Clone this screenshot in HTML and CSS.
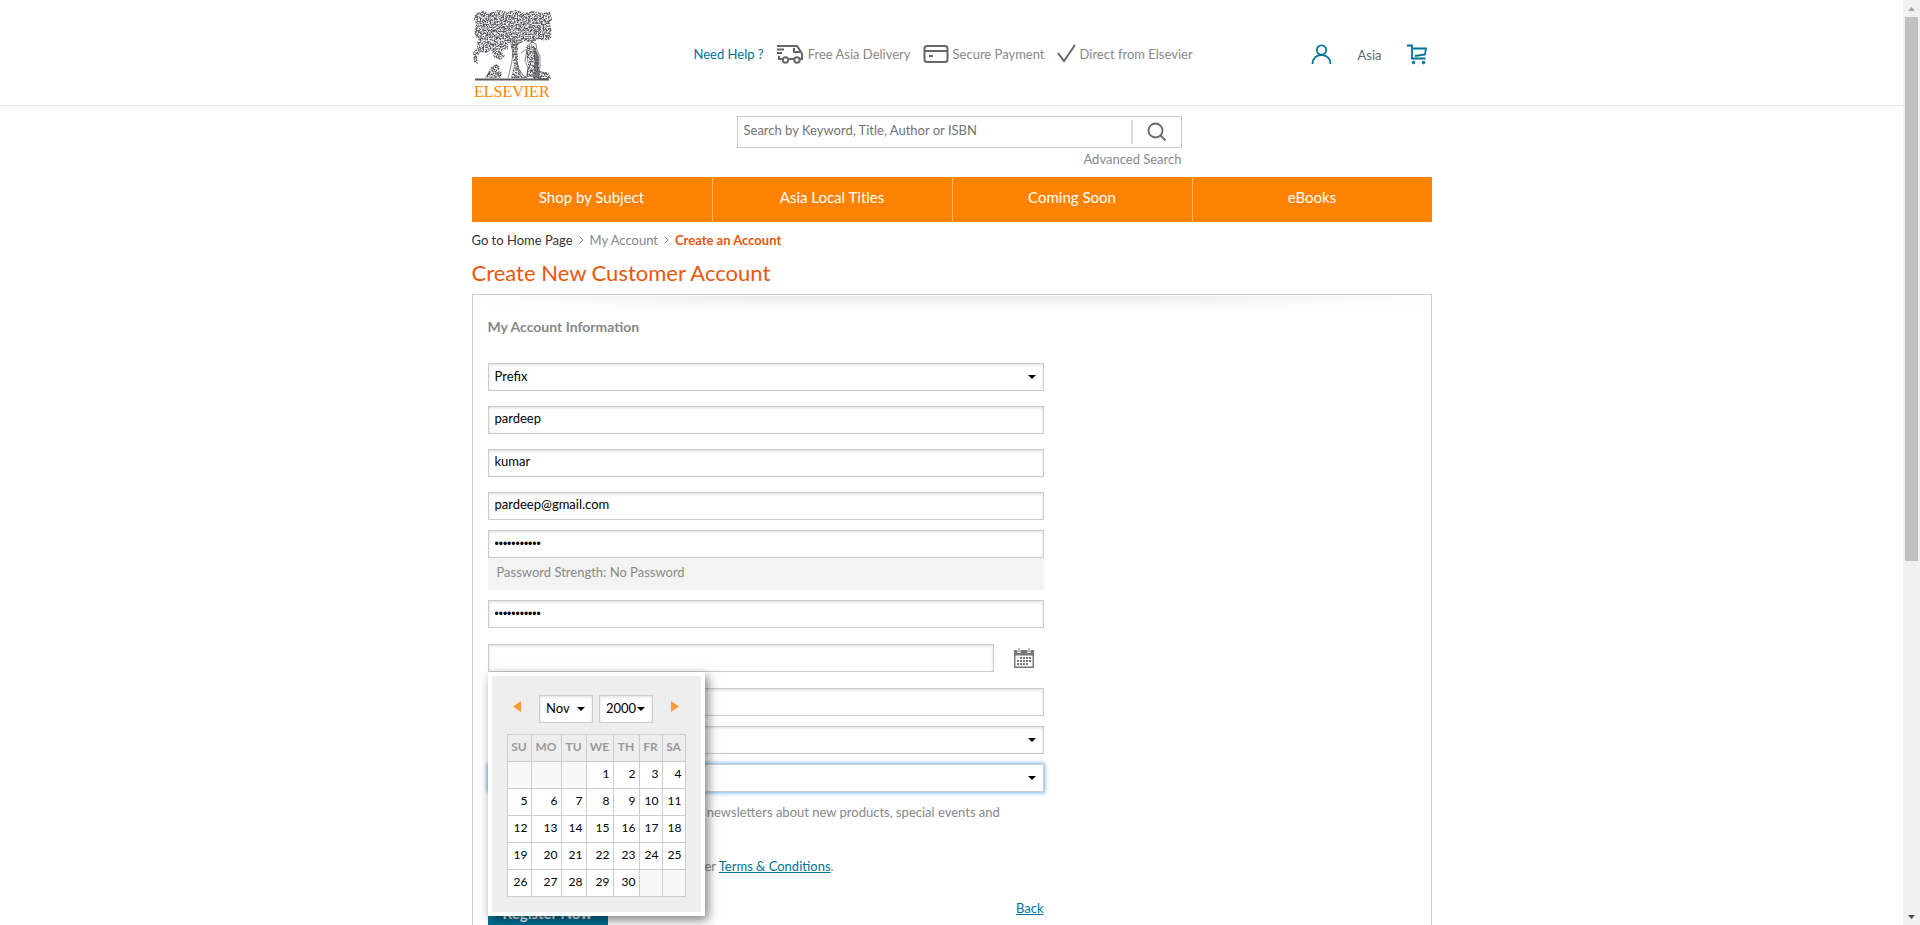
FILE: index.html
```html
<!DOCTYPE html>
<html lang="en">
<head>
<meta charset="utf-8">
<title>Create New Customer Account</title>
<link rel="stylesheet" href="styles.css">
</head>
<body>
<div class="page">
  <header class="header">
    <div class="wrap header-row">
      <a class="logo" href="#" aria-label="Elsevier">
        <svg width="80" height="90" viewBox="0 0 80 90">
          <defs>
            <filter id="engrave" x="0" y="0" width="100%" height="100%">
              <feTurbulence type="fractalNoise" baseFrequency="0.7" numOctaves="3" seed="8" result="n"/>
              <feColorMatrix in="n" type="matrix" values="0 0 0 0 0  0 0 0 0 0  0 0 0 0 0  3.500 0 0 0 -1.2" result="m"/>
              <feComposite in="SourceGraphic" in2="m" operator="in"/>
            </filter>
          </defs>
          <g filter="url(#engrave)" fill="#54565b">
            <path d="M2 4L9 1 17 3 25 0 34 2 43 0 51 3 60 1 69 3 77 2 79 9 77 14 79 22 78 29 72 31 65 29 60 33 51 31 47 34 41 30 36 34 30 29 23 33 16 30 9 32 3 28 1 22 3 15 1 10z"/>
            <path d="M4 32l9-2 9 3 9-3 4 4 0 5-7 2 4 5-5 4-6-3-3-7-5 3-6-1-3 5 1 7-4-2-2-9 5-4z"/>
            <path d="M13 66l4-8 6-4 4 3-2 4 4 1-1 6H12zM60 66l4-6 6 2 6 0 2 7H60z"/>
            <path d="M37 30h8l0 24 4 10 6 4H38l3-12z"/>
            <path d="M52 38l6-4 5 3 3 10 0 20H53l2-12z"/>
          </g>
          <g fill="none" stroke="#54565b" stroke-width=".7">
            <path d="M39 30l1 10-1 11-2 9-2 8M44 30l-1 9 0 12 3 9 5 6 3 2M34 25l7 7 3 4 7-10M54 36l5-4 4 2 1 6 3 6 0 10-1 11M54 40l-2 11 3 7-1 9M61 40l1 10-1 18M64 45l1 20M52 40l-4 3"/>
          </g>
          <path d="M60 37l3 2 3 9-1 20-4 0 1-12z" fill="#54565b" opacity=".65"/>
          <path d="M2 69.500H76" stroke="#54565b" stroke-width="2"/>
          <text class="logo-name" x="1" y="87">ELSEVIER</text>
        </svg>
      </a>
      <ul class="perks">
        <li class="help"><a href="#">Need Help ?</a></li>
        <li class="perk truck">
          <svg width="28" height="20" viewBox="0 0 28 20" fill="none" stroke="#666" stroke-width="2"><path d="M1 2H21L25 8 26 10V15H24M1 5.500H8M1 9H6M3 12V15H6M13 15H18"/><path d="M18 4v4h6"/><circle cx="9.500" cy="16" r="2.700"/><circle cx="21" cy="16" r="2.700"/></svg>
          Free Asia Delivery</li>
        <li class="perk card">
          <svg width="26" height="20" viewBox="0 0 26 20" fill="none" stroke="#666" stroke-width="2"><rect x="1.500" y="2" width="23" height="16" rx="2.500"/><path d="M2 7H24M6 12H10"/></svg>
          Secure Payment</li>
        <li class="perk check">
          <svg width="19" height="20" viewBox="0 0 19 20" fill="none" stroke="#666" stroke-width="2"><path d="M1 9L7 17 18 1"/></svg>
          Direct from Elsevier</li>
      </ul>
      <div class="tools">
        <a href="#" aria-label="Account"><svg width="21" height="21" viewBox="0 0 21 21" fill="none" stroke="#007398" stroke-width="1.800"><circle cx="10.500" cy="6" r="4.700"/><path d="M1.500 20c0-5.500 4-9 9-9s9 3.500 9 9"/></svg></a>
        <span class="region">Asia</span>
        <a href="#" aria-label="Cart"><svg width="21" height="21" viewBox="0 0 21 21" fill="none" stroke="#007398" stroke-width="1.800"><path d="M0 1.500H5V14.500H18.500M5 4.500H19L18 10.500 8 12"/><circle cx="6.500" cy="18.500" r="1.300" fill="#007398" stroke-width="1"/><circle cx="16.500" cy="18.500" r="1.300" fill="#007398" stroke-width="1"/></svg></a>
      </div>
    </div>
  </header>

  <main class="wrap">
    <form class="search">
      <div class="search-box">
        <input type="text" aria-label="Search" placeholder="Search by Keyword, Title, Author or ISBN">
        <button type="button" aria-label="Search"><svg width="20" height="20" viewBox="0 0 20 20" fill="none" stroke="#666" stroke-width="1.800"><circle cx="8.500" cy="8.500" r="7"/><path d="M13.500 13.500L18.500 18.500"/></svg></button>
      </div>
      <a class="advanced" href="#">Advanced Search</a>
    </form>

    <nav class="nav">
      <a href="#">Shop by Subject</a>
      <a href="#">Asia Local Titles</a>
      <a href="#">Coming Soon</a>
      <a href="#">eBooks</a>
    </nav>

    <div class="crumbs">
      <a class="home" href="#">Go to Home Page</a><svg class="sep" width="5" height="8" viewBox="0 0 5 8" fill="none" stroke="#888"><path d="M.5 .5L4 4 .5 7.500"/></svg><a href="#">My Account</a><svg class="sep" width="5" height="8" viewBox="0 0 5 8" fill="none" stroke="#888"><path d="M.5 .5L4 4 .5 7.500"/></svg><strong>Create an Account</strong>
    </div>
    <h1>Create New Customer Account</h1>

    <section class="panel">
      <h2>My Account Information</h2>
      <form class="form">
        <div class="select"><select class="field" aria-label="Prefix"><option>Prefix</option></select></div>
        <input class="field gap-l" type="text" aria-label="First name" value="pardeep">
        <input class="field gap-l" type="text" aria-label="Last name" value="kumar">
        <input class="field gap-l" type="text" aria-label="Email" value="pardeep@gmail.com">
        <input class="field gap-s" type="password" aria-label="Password" value="password123">
        <div class="strength">Password Strength: No Password</div>
        <input class="field gap-s" type="password" aria-label="Confirm password" value="password123">
        <div class="date gap-xl">
          <input class="field" type="text" aria-label="Date of birth">
          <button class="cal-btn" type="button" aria-label="Open calendar"><svg width="22" height="21" viewBox="0 0 22 21"><path d="M1 2H21V20H1z" fill="#777"/><path d="M2.500 7.500H19.500V18.500H2.500z" fill="#fff"/><path d="M4.500 0h3v5h-3zM14.500 0h3v5h-3z" fill="#fff"/><path d="M5.500 0h1v4h-1zM15.500 0h1v4h-1z" fill="#777"/><path d="M7 10H18M4 13H18M4 16H15" stroke="#777" stroke-width="2" stroke-dasharray="2 1"/></svg></button>
          <div class="picker">
            <div class="picker-head">
              <button type="button" aria-label="Previous month"><svg width="8" height="11" viewBox="0 0 8 11"><path d="M8 0V11L0 5.500z" fill="#ff9933"/></svg></button>
              <div class="select"><select class="field" aria-label="Month"><option>Nov</option></select></div>
              <div class="select"><select class="field" aria-label="Year"><option>2000</option></select></div>
              <button type="button" aria-label="Next month"><svg width="8" height="11" viewBox="0 0 8 11"><path d="M0 0V11L8 5.500z" fill="#ff9933"/></svg></button>
            </div>
            <table>
              <colgroup><col class="c24"><col class="c30"><col class="c25"><col class="c27"><col class="c26"><col class="c23"><col class="c23"></colgroup>
              <thead><tr><th>SU</th><th>MO</th><th>TU</th><th>WE</th><th>TH</th><th>FR</th><th>SA</th></tr></thead>
              <tbody>
                <tr><td class="off"></td><td class="off"></td><td class="off"></td><td>1</td><td>2</td><td>3</td><td>4</td></tr>
                <tr><td>5</td><td>6</td><td>7</td><td>8</td><td>9</td><td>10</td><td>11</td></tr>
                <tr><td>12</td><td>13</td><td>14</td><td>15</td><td>16</td><td>17</td><td>18</td></tr>
                <tr><td>19</td><td>20</td><td>21</td><td>22</td><td>23</td><td>24</td><td>25</td></tr>
                <tr><td>26</td><td>27</td><td>28</td><td>29</td><td>30</td><td class="off"></td><td class="off"></td></tr>
              </tbody>
            </table>
          </div>
        </div>
        <input class="field gap-xl" type="text" aria-label="Phone">
        <div class="select gap-s"><select class="field" aria-label="Profession"><option></option></select></div>
        <div class="select gap-s"><select class="field focused" aria-label="Speciality"><option></option></select></div>
        <label class="check-row news"><input type="checkbox"><span>Yes, send me your newsletters about new products, special events and offers.</span></label>
        <label class="check-row terms"><input type="checkbox"><span>I accept the Elsevier user <a href="#">Terms &amp; Conditions</a>.</span></label>
        <div class="actions"><button class="register" type="button">Register Now</button><a href="#">Back</a></div>
      </form>
    </section>
  </main>
</div>
<div class="scrollbar">
  <svg width="17" height="17" viewBox="0 0 17 17"><path d="M5 11H12L8.500 7z" fill="#a3a3a3"/></svg>
  <div class="track"><div class="thumb"></div></div>
  <svg width="17" height="17" viewBox="0 0 17 17"><path d="M5 7H12L8.500 11z" fill="#505050"/></svg>
</div>
</body>
</html>
```
FILE: styles.css
```css
* { box-sizing: border-box; }
body {
  margin: 0;
  height: 100vh;
  display: grid;
  grid-template-columns: minmax(0, 1fr) 17px;
  overflow: hidden;
  background: #fff;
  color: #888;
  font: 13px/20px Lato, "Liberation Sans", sans-serif;
}
a { color: inherit; text-decoration: none; }
button { padding: 0; border: 0; background: none; font: inherit; }
svg { display: block; flex: none; }
.page { overflow: hidden; }
.wrap { max-width: 960px; margin: 0 auto; }

.header { border-bottom: 1px solid #e4e4e4; }
.header-row { display: flex; align-items: flex-start; padding: 10px 4px 5px 1px; }
.logo-name { font: 16px "Liberation Serif", serif; fill: #ff8200; }
.perks { display: flex; list-style: none; margin: 34px 0 0 141px; padding: 0; }
.perk { display: flex; align-items: center; gap: 4px; margin-left: 12px; }
.help { color: #007398; }
.tools { display: flex; align-items: center; gap: 25px; margin: 34px 0 0 auto; color: #666; }

.search { width: 445px; margin: 10px 250px 0 auto; text-align: right; }
.search-box { display: flex; height: 32px; padding: 3px 0; border: 1px solid #ccc; }
.search-box input { flex: 1; min-width: 0; padding: 0 6px 4px; border: 0; border-right: 2px solid #ddd; font: inherit; outline: 0; }
.search-box input::placeholder { color: #737373; }
.search-box button { width: 48px; display: grid; place-items: center; }
.advanced { display: block; margin-top: 1px; }

.nav { display: grid; grid-template-columns: repeat(4, 1fr); margin-top: 8px; background: #ff8200; }
.nav a { height: 45px; line-height: 40px; font-size: 15px; color: #fff; text-align: center; }
.nav a + a { border-left: 1px solid #ffb566; }

.crumbs { display: flex; align-items: center; margin-top: 8px; }
.crumbs .home { color: #333; }
.crumbs .sep { margin: 0 6px; }
.crumbs strong { color: #e9570b; }
h1 { margin: 8px 0 7px; font-size: 22px; line-height: 29px; font-weight: 400; color: #e9570b; }

.panel {
  padding: 22px 15px 0;
  border: 1px solid #ccc;
  background:
    linear-gradient(90deg, #fff, transparent 30%, transparent 70%, #fff) 0 0 / 100% 16px no-repeat,
    linear-gradient(#ebebeb, #fff) 0 1px / 100% 14px no-repeat;
}
h2 { margin: 0; font-size: 14px; line-height: 20px; }
.form { max-width: 556px; margin-top: 26px; }
.field { display: block; width: 100%; height: 28px; padding: 0 6px 2px; border: 1px solid #ccc; border-radius: 0; background: #fff; box-shadow: inset 0 1px 3px #ddd; color: #000; font: inherit; outline: 0; appearance: none; }
.field[type="text"] { padding-bottom: 4px; }
.field[type="password"] { padding-bottom: 0; font: 12px "Liberation Sans", sans-serif; }
.select { position: relative; }
.select::after { content: ""; position: absolute; right: 8px; top: 12px; border: 4px solid transparent; border-top-color: #000; border-bottom: 0; pointer-events: none; }
.gap-s { margin-top: 10px; }
.gap-l { margin-top: 15px; }
.gap-xl { margin-top: 16px; }
.focused { box-shadow: 0 0 4px 1px #7ab5e8; }
.strength { height: 32px; padding: 4px 9px; background: #f3f3f3; }

.date { position: relative; display: flex; align-items: center; gap: 19px; padding-right: 9px; }
.date > .field { flex: 1; min-width: 0; }
.picker { position: absolute; z-index: 1; left: 0; top: 28px; width: 217px; padding: 19px 15px 15px; border: 4px solid #fff; background: #eee; box-shadow: 3px 4px 10px rgba(0, 0, 0, .5); }
.picker-head { display: grid; grid-template-columns: 20px 54px 54px 20px; justify-content: center; column-gap: 6px; height: 28px; margin-bottom: 11px; }
.picker-head > button { display: flex; padding-top: 6px; }
.picker-head > button:last-child { justify-content: flex-end; }
table { width: 179px; border-collapse: collapse; table-layout: fixed; }
th, td { height: 27px; padding: 0 3px 2px 0; border: 1px solid #ccc; background: #fff; color: #000; text-align: right; font-size: 12px; line-height: 20px; }
th { padding: 0 0 2px; background: #eee; color: #999; text-align: center; }
.off { background: #f8f8f8; }
.c23 { width: 23px; }
.c24 { width: 24px; }
.c25 { width: 25px; }
.c26 { width: 26px; }
.c27 { width: 27px; }
.c30 { width: 30px; }

.check-row { display: flex; align-items: flex-start; gap: 8px; }
.check-row input { margin: 4px 0 0; }
.check-row a, .actions a { color: #007398; text-decoration: underline; }
.news { margin: 10px 0 14px; padding: 0 24px 0 93px; }
.terms { padding-left: 66px; }
.actions { display: flex; justify-content: space-between; align-items: flex-start; margin-top: 22px; }
.register { width: 120px; height: 36px; margin-top: -3px; background: #007398; color: #fff; font-size: 15px; font-weight: 700; }

.scrollbar { display: flex; flex-direction: column; background: #f1f1f1; }
.track { flex: 1; padding: 0 2px; }
.thumb { height: 61%; background: #c1c1c1; }
```
